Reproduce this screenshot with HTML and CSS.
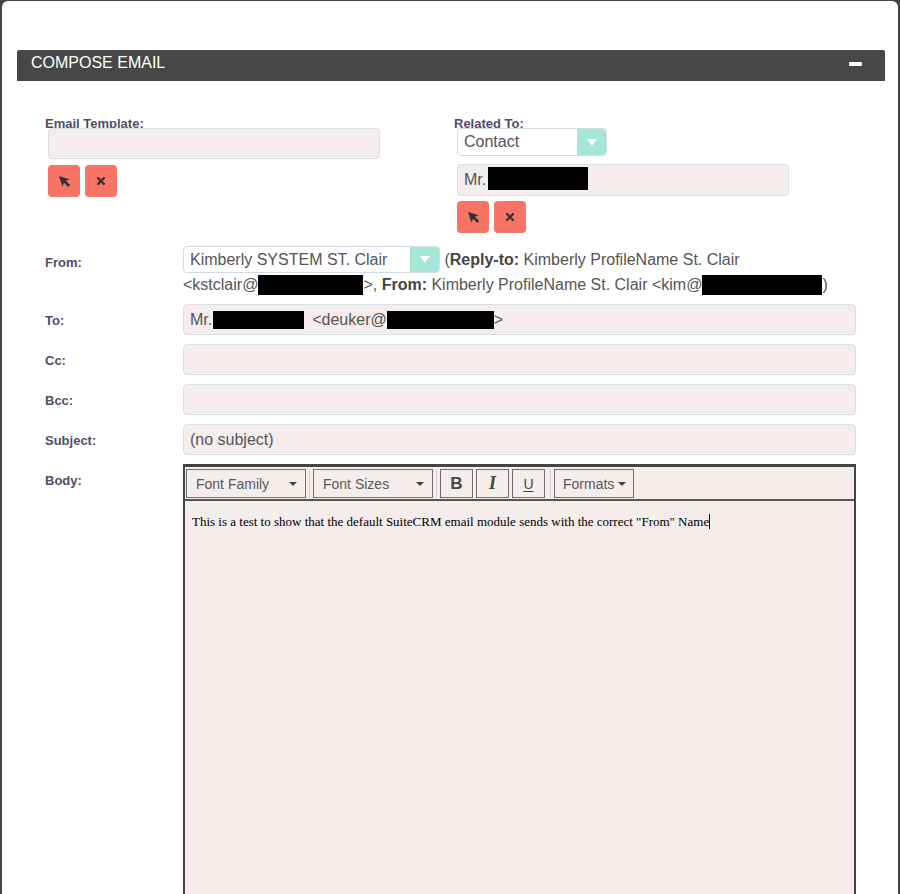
FILE: index.html
```html
<!DOCTYPE html>
<html lang="en">
<head>
<meta charset="utf-8">
<title>Compose Email</title>
<link rel="stylesheet" href="styles.css">
</head>
<body>
<div class="modal">
  <div class="panel-heading">
    <span class="title">COMPOSE EMAIL</span>
    <span class="minus"></span>
  </div>

  <div class="top-row">
    <div class="col">
      <label class="top-label">Email Template:</label>
      <div class="input top-input"></div>
      <div class="btns btns-left">
        <button class="btn" type="button"><svg width="13" height="13" viewBox="0 0 13 13"><path d="M1 1 L11.5 4.2 L8 5.9 L12.2 10.1 L10.3 12 L6.1 7.8 L4.3 11.4 Z" fill="#333"/></svg></button>
        <button class="btn" type="button"><svg width="8" height="8" viewBox="0 0 8 8"><path d="M1 1 L7 7 M7 1 L1 7" stroke="#333" stroke-width="2.2" stroke-linecap="square"/></svg></button>
      </div>
    </div>
    <div class="col">
      <label class="top-label">Related To:</label>
      <div class="select related-select"><span class="sel-text">Contact</span><span class="sel-btn"><span class="tri"></span></span></div>
      <div class="input top-input related-input">Mr.<span class="redact rel-box"></span></div>
      <div class="btns btns-right">
        <button class="btn" type="button"><svg width="13" height="13" viewBox="0 0 13 13"><path d="M1 1 L11.5 4.2 L8 5.9 L12.2 10.1 L10.3 12 L6.1 7.8 L4.3 11.4 Z" fill="#333"/></svg></button>
        <button class="btn" type="button"><svg width="8" height="8" viewBox="0 0 8 8"><path d="M1 1 L7 7 M7 1 L1 7" stroke="#333" stroke-width="2.2" stroke-linecap="square"/></svg></button>
      </div>
    </div>
  </div>

  <div class="fields">
    <div class="row from-row">
      <div class="label">From:</div>
      <div class="from-field"><span class="select from-select"><span class="sel-text">Kimberly SYSTEM ST. Clair</span><span class="sel-btn"><span class="tri"></span></span></span> (<b>Reply-to:</b> Kimberly ProfileName St. Clair <span class="nw">&lt;kstclair@<span class="redact from-box1"></span>&gt;,</span> <b>From:</b> Kimberly ProfileName St. Clair <span class="nw">&lt;kim@<span class="redact from-box2"></span>)</span></div>
    </div>
    <div class="row">
      <div class="label">To:</div>
      <div class="input">Mr.<span class="redact to-box1"></span><span class="to-gap"></span>&lt;deuker@<span class="redact to-box2"></span>&gt;</div>
    </div>
    <div class="row">
      <div class="label">Cc:</div>
      <div class="input"></div>
    </div>
    <div class="row">
      <div class="label">Bcc:</div>
      <div class="input"></div>
    </div>
    <div class="row">
      <div class="label">Subject:</div>
      <div class="input">(no subject)</div>
    </div>
    <div class="row">
      <div class="label">Body:</div>
      <div class="editor">
        <div class="toolbar">
          <div class="grp">
            <button class="tb-btn dd" type="button"><span>Font Family</span><span class="caret"></span></button>
          </div>
          <div class="grp">
            <button class="tb-btn dd" type="button"><span>Font Sizes</span><span class="caret"></span></button>
          </div>
          <div class="grp">
            <button class="tb-btn icon b" type="button">B</button>
            <button class="tb-btn icon i" type="button">I</button>
            <button class="tb-btn icon u" type="button">U</button>
          </div>
          <div class="grp grp-last">
            <button class="tb-btn formats" type="button"><span>Formats</span><span class="caret"></span></button>
          </div>
        </div>
        <div class="content">This is a test to show that the default SuiteCRM email module sends with the correct "From" Name<span class="cursor"></span></div>
      </div>
    </div>
  </div>
</div>
</body>
</html>
```

FILE: styles.css
```css
* { box-sizing: border-box; }

body {
  margin: 0;
  background: #454545;
  font-family: "Liberation Sans", Arial, sans-serif;
  overflow: hidden;
}

.modal {
  margin: 1px 2px 0;
  height: 893px;
  background: #fff;
  border-radius: 6px 6px 0 0;
  padding: 49px 13px 0 15px;
}

.panel-heading {
  height: 31px;
  background: #474747;
  color: #fff;
  display: flex;
  align-items: center;
  justify-content: space-between;
  padding: 0 23px 0 14px;
  border-radius: 2px 2px 0 0;
}

.title {
  font-size: 16px;
  line-height: 18px;
  padding-bottom: 5px;
}

.minus {
  width: 13px;
  height: 4px;
  background: #fff;
  border-radius: 1px;
  margin-bottom: 3px;
}

.top-row {
  display: grid;
  grid-template-columns: 409px 1fr;
  padding-left: 28px;
  margin-top: 35px;
}

.top-label {
  display: block;
  height: 12px;
  font-size: 13px;
  line-height: 15px;
  font-weight: bold;
  color: #534d64;
}

.input {
  position: relative;
  height: 31px;
  border: 1px solid #d6dee6;
  border-radius: 4px;
  background: #f5ecec;
  padding: 0 6px;
  font-size: 16px;
  line-height: 29px;
  color: #555;
  white-space: nowrap;
}

.top-input {
  width: 332px;
  margin-left: 3px;
}

.related-input {
  height: 32px;
  line-height: 30px;
  margin-top: 8px;
}

.btns {
  display: flex;
  gap: 5px;
  margin-left: 3px;
}

.btns-left { margin-top: 6px; }
.btns-right { margin-top: 5px; }

.btn {
  width: 32px;
  height: 32px;
  border: none;
  border-radius: 4px;
  background: #f87464;
  padding: 0;
  display: flex;
  align-items: center;
  justify-content: center;
}

.select {
  position: relative;
  display: inline-flex;
  height: 27px;
  border: 1px solid #d3dde6;
  border-radius: 4px;
  background: #fff;
  overflow: hidden;
  font-size: 16px;
  color: #555;
  font-weight: normal;
}

.related-select {
  display: flex;
  width: 150px;
  height: 28px;
  margin-left: 3px;
}

.sel-text {
  flex: 1;
  padding-left: 6px;
  line-height: 25px;
  white-space: nowrap;
}

.related-select .sel-text { line-height: 26px; }

.sel-btn {
  width: 30px;
  margin: -1px -1px -1px 0;
  background: #a5e6d6;
  display: flex;
  align-items: center;
  justify-content: center;
}

.tri {
  width: 0;
  height: 0;
  border-left: 5px solid transparent;
  border-right: 5px solid transparent;
  border-top: 7px solid #fff;
}

.from-select { width: 257px; }

.redact {
  display: inline-block;
  background: #000;
}

.rel-box { width: 100px; height: 23px; margin-left: 2px; vertical-align: -5px; }
.to-box1 { width: 91px; height: 18px; margin-left: 1px; vertical-align: -4px; }
.to-gap { display: inline-block; width: 8px; }
.to-box2 { width: 107px; height: 18px; vertical-align: -4px; }
.from-box1 { width: 105px; height: 20px; vertical-align: -5px; }
.from-box2 { width: 120px; height: 20px; vertical-align: -5px; }

.fields {
  padding: 0 29px 0 28px;
  margin-top: 13px;
}

.row {
  display: grid;
  grid-template-columns: 138px 1fr;
  margin-bottom: 9px;
}

.from-row { margin-bottom: 7px; }

.label {
  padding-top: 9px;
  font-size: 13px;
  line-height: 15px;
  font-weight: bold;
  color: #534d64;
}

.from-field {
  font-size: 16px;
  line-height: 24px;
  color: #555;
}

.from-field b { color: #444; }

.nw { white-space: nowrap; }

.editor {
  height: 440px;
  border: 2px solid #444;
  border-top-width: 3px;
  border-bottom: none;
  background: #f5ecec;
}

.toolbar {
  display: flex;
  padding: 2px 0 1px 1px;
  border-bottom: 2px solid #555;
}

.grp {
  display: flex;
  gap: 3px;
}

.grp + .grp {
  margin-left: 3px;
  padding-left: 3px;
  border-left: 1px solid #d2d2d2;
}

.grp.grp-last { margin-left: 5px; }

.tb-btn {
  height: 29px;
  border: 1px solid #6e6e6e;
  background: transparent;
  font-family: "Liberation Sans", Arial, sans-serif;
  font-size: 14px;
  color: #595959;
  display: flex;
  align-items: center;
  padding: 0;
}

.dd {
  width: 120px;
  justify-content: space-between;
  padding: 0 8px 0 9px;
}

.formats {
  width: 80px;
  gap: 4px;
  padding: 0 8px;
}

.caret {
  width: 0;
  height: 0;
  border-left: 4px solid transparent;
  border-right: 4px solid transparent;
  border-top: 4px solid #444;
}

.icon {
  width: 33px;
  justify-content: center;
  color: #444;
}

.b { font-size: 17px; font-weight: bold; }
.i { font-family: "Liberation Serif", "Times New Roman", serif; font-style: italic; font-weight: bold; font-size: 18px; }
.u { font-size: 14px; text-decoration: underline; text-underline-offset: 2px; }

.content {
  padding: 13px 7px;
  font-family: "Liberation Serif", "Times New Roman", serif;
  font-size: 13px;
  line-height: 14px;
  color: #000;
}

.cursor {
  display: inline-block;
  width: 1px;
  height: 15px;
  background: #000;
  vertical-align: -3px;
}
```
